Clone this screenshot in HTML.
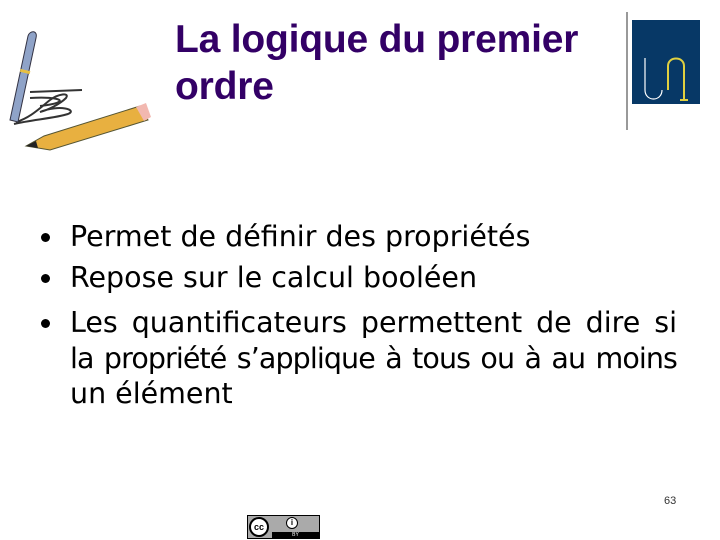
<!DOCTYPE html>
<html><head><meta charset="utf-8"><style>
body{margin:0;width:720px;height:540px;background:#fff;position:relative;overflow:hidden;font-family:"Liberation Sans",sans-serif}
.t{position:absolute;left:175px;top:16px;font-weight:bold;font-size:39px;line-height:47px;color:#330066;letter-spacing:-0.2px}
ul{position:absolute;left:40px;top:219px;margin:0;padding:0;list-style:none;font-family:"DejaVu Sans","Liberation Sans",sans-serif;font-size:28.5px;color:#000;width:637px;letter-spacing:0}
li{position:relative;padding-left:30px;line-height:35px;margin-bottom:6px}
li:before{content:"";position:absolute;left:1px;top:14px;width:9px;height:9px;border-radius:50%;background:#000}
.jl{text-align:justify;text-align-last:justify}
</style></head><body>
<svg width="160" height="160" style="position:absolute;left:0;top:0">
<path d="M16 122 C30 118,40 108,50 100 C58 94,70 92,66 98 C60 104,48 110,40 112 C60 104,78 110,68 114 C56 118,30 120,14 124" fill="none" stroke="#333" stroke-width="2"/>
<path d="M30 92 L82 90 M30 98 C60 96,74 102,40 106" fill="none" stroke="#333" stroke-width="2"/>
<path d="M10 120 L28 36 C30 30,38 30,36 38 L18 122 Z" fill="#8fa3c8" stroke="#334" stroke-width="1"/>
<rect x="20" y="70" width="10" height="3" fill="#e8c040" transform="rotate(14 25 72)"/>
<path d="M26 146 L44 136 L140 106 L148 120 L50 150 Z" fill="#e8b040" stroke="#553" stroke-width="1"/>
<path d="M26 146 L36 141 L38 148 Z" fill="#222"/>
<path d="M136 107 L146 103 L151 117 L144 121 Z" fill="#f2b8b0"/>
</svg>
<div class="t">La logique du premier<br>ordre</div>
<div style="position:absolute;left:626px;top:12px;width:2px;height:118px;background:#999"></div>
<div style="position:absolute;left:632px;top:20px;width:68px;height:84px;background:#073866">
<svg width="68" height="84"><path d="M13 38 L13 70 C13 82,30 82,30 70" fill="none" stroke="#fff" stroke-width="1.2"/><path d="M36 70 L36 46 C36 36,52 36,52 46 L52 80 M48 80 L56 80" fill="none" stroke="#e0d040" stroke-width="2"/></svg>
</div>
<ul>
<li>Permet de définir des propriétés</li>
<li>Repose sur le calcul booléen</li>
<li style="margin-top:10px;line-height:35.5px"><div class="jl">Les quantificateurs permettent de dire si</div><div class="jl" style="letter-spacing:-0.9px;word-spacing:-2px">la propriété s’applique à tous ou à au moins</div><div>un élément</div></li>
</ul>
<div style="position:absolute;left:664px;top:495px;font-size:11px;color:#333">63</div>
<div style="position:absolute;left:247px;top:515px;width:73px;height:24px;background:#aaa;border:1px solid #000;box-sizing:border-box">
<div style="position:absolute;left:1px;top:1px;width:20px;height:20px;border-radius:50%;background:#fff;border:2px solid #000;box-sizing:border-box;font-size:9px;font-weight:bold;text-align:center;line-height:16px">cc</div>
<div style="position:absolute;left:38px;top:1px;width:12px;height:12px;border-radius:50%;background:#fff;border:1.5px solid #000;box-sizing:border-box;font-size:8px;font-weight:bold;text-align:center;line-height:10px">i</div>
<div style="position:absolute;left:24px;top:16px;width:47px;height:6px;background:#000;color:#fff;font-size:5px;text-align:center;line-height:6px">BY</div>
</div>
</body></html>
